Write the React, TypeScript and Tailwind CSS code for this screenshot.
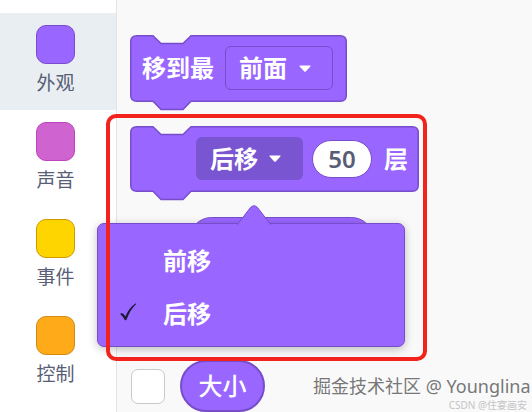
const font = "font-['Noto_Sans','Noto_Sans_CJK_SC',sans-serif]";

function Caret({ className = "" }: { className?: string }) {
  return (
    <svg width="14" height="9" viewBox="0 0 14 9" className={className}>
      <path d="M2 1.5 H12 Q13 1.5 12.3 2.4 L7.8 7.4 Q7 8.2 6.2 7.4 L1.7 2.4 Q1 1.5 2 1.5 Z" fill="#ffffff" />
    </svg>
  );
}

function Check({ className = "" }: { className?: string }) {
  return (
    <svg width="18" height="18" viewBox="0 0 18 18" className={className}>
      <path
        d="M1 10.8 Q3 9.2 5 11.6 L6.4 13.4 Q10 5 16.4 0.6 Q17.6 0 17 1.2 Q11.2 6.4 7.6 16.6 Q7 17.9 5.8 17 Q4 13.6 1 10.8 Z"
        fill="#1e1a36"
      />
    </svg>
  );
}

// stack block outline with the top notch and bottom tab
function BlockShape({ w, h }: { w: number; h: number }) {
  const d = `M0.75 6.75 Q0.75 0.75 6.75 0.75 L23 0.75 L31 8.5 L53 8.5 L61 0.75 L${w - 6.75} 0.75 Q${w - 0.75} 0.75 ${w - 0.75} 6.75 L${w - 0.75} ${h - 6.75} Q${w - 0.75} ${h - 0.75} ${w - 6.75} ${h - 0.75} L61 ${h - 0.75} L53 ${h + 7.5} L31 ${h + 7.5} L23 ${h - 0.75} L6.75 ${h - 0.75} Q0.75 ${h - 0.75} 0.75 ${h - 6.75} Z`;
  return (
    <svg width={w} height={h + 10} className="absolute left-0 top-0 overflow-visible">
      <path d={d} fill="#9966ff" stroke="#774dcb" strokeWidth="1.5" strokeLinejoin="round" />
    </svg>
  );
}

const categories = [
  { name: "外观", fill: "bg-[#9966ff]", border: "border-[#774dcb]", active: true },
  { name: "声音", fill: "bg-[#cf63cf]", border: "border-[#bd42bd]", active: false },
  { name: "事件", fill: "bg-[#ffd500]", border: "border-[#cc9900]", active: false },
  { name: "控制", fill: "bg-[#ffab19]", border: "border-[#cf8b17]", active: false },
];

export default function App() {
  return (
    <div className={`relative w-[532px] h-[412px] overflow-hidden flex bg-[#f9f9f9] ${font}`}>
      {/* category sidebar */}
      <div className="w-[117px] h-full bg-white border-r border-[#e3e3e3] pt-[13px] flex flex-col">
        {categories.map((c) => (
          <div
            key={c.name}
            className={`h-[97px] pr-[5px] pt-[12px] flex flex-col items-center ${c.active ? "bg-[#e9eef2]" : ""}`}
          >
            <div className={`w-[39px] h-[39px] rounded-[10px] border ${c.fill} ${c.border}`} />
            <div className="mt-[6px] text-[19px] leading-[26px] text-[#575e75]">{c.name}</div>
          </div>
        ))}
      </div>

      {/* script area */}
      <div className="flex-1 flex flex-col pl-[13px] pt-[35px]">
        <div className="relative w-[217px] h-[67px]">
          <BlockShape w={217} h={67} />
          <div className="relative h-full flex items-center pl-[12px]">
            <span className="text-[24px] font-bold text-white leading-none">移到最</span>
            <div className="ml-[11px] w-[108px] h-[44px] rounded-[6px] border border-[#774dcb] bg-[#9966ff] flex items-center pl-[13px]">
              <span className="text-[24px] font-bold text-white leading-none">前面</span>
              <Caret className="ml-[11px]" />
            </div>
          </div>
        </div>

        <div className="relative w-[289px] h-[66px] mt-[25px]">
          <BlockShape w={289} h={66} />
          <div className="relative h-full flex items-center pl-[66px]">
            <div className="w-[107px] h-[43px] rounded-[6px] bg-[#7a55d2] flex items-center pl-[14px]">
              <span className="text-[24px] font-bold text-white leading-none">后移</span>
              <Caret className="ml-[10px]" />
            </div>
            <div className="ml-[9px] w-[60px] h-[38px] rounded-full bg-white border-[1.5px] border-[#774dcb] flex items-center justify-center">
              <span className="text-[24px] font-semibold text-[#575e75] leading-none">50</span>
            </div>
            <span className="ml-[12px] text-[24px] font-bold text-white leading-none">层</span>
          </div>
        </div>

        <div className="ml-[59px] mt-[25px] w-[185px] h-[46px] rounded-full bg-[#9966ff] border-[1.5px] border-[#774dcb]" />

        <div className="mt-[98px] flex items-center">
          <div className="ml-[1px] w-[34px] h-[35px] rounded-[7px] bg-white border border-[#c9c9c9]" />
          <div className="ml-[15px] w-[85px] h-[52px] rounded-full bg-[#9966ff] border-2 border-[#774dcb] flex items-center justify-center">
            <span className="text-[24px] font-medium text-white leading-none">大小</span>
          </div>
        </div>
      </div>

      {/* open dropdown menu */}
      <div className="absolute left-[97px] top-[223px] w-[308px] h-[124px] rounded-[7px] bg-[#9966ff] border border-[#774dcb] shadow-[0_2px_8px_rgba(0,0,0,0.25)] pt-[10px]">
        <svg width="34" height="20" viewBox="0 0 34 20" className="absolute left-[139px] top-[-19px]">
          <path d="M0 20 L13.5 2.5 Q17 -1 20.5 2.5 L34 20" fill="#9966ff" stroke="#774dcb" strokeWidth="1" />
        </svg>
        <div className="h-[53px] flex items-center pl-[65px]">
          <span className="text-[24px] font-bold text-white leading-none">前移</span>
        </div>
        <div className="relative h-[53px] flex items-center pl-[65px]">
          <Check className="absolute left-[21px] top-[16px]" />
          <span className="text-[24px] font-bold text-white leading-none">后移</span>
        </div>
      </div>

      {/* highlight box */}
      <div className="absolute left-[106px] top-[114px] w-[321px] h-[247px] rounded-[10px] border-[4px] border-[#f2231c]" />

      {/* watermarks */}
      <div className="absolute left-[313px] top-[375px] text-[18px] leading-[22px] text-[#777777] [text-shadow:0_0_2px_#fff]">
        掘金技术社区 @ Younglina
      </div>
      <div className="absolute right-[5px] top-[399px] whitespace-nowrap text-[10px] leading-[12px] text-[#c4c4c4]">
        CSDN @住宴画安
      </div>
    </div>
  );
}
